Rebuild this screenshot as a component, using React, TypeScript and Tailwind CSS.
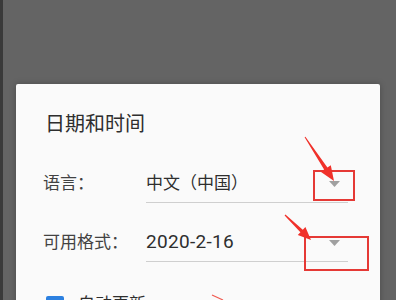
import React from "react";

function Caret() {
  return (
    <svg width="11" height="6" viewBox="0 0 11 6" className="absolute right-[8px] top-1/2 -translate-y-1/2">
      <path d="M0 0 H11 L5.5 6 Z" fill="#a0a0a0" />
    </svg>
  );
}

function Row({ label, value, latin }: { label: string; value: string; latin?: boolean }) {
  return (
    <div className="flex items-center">
      <div className="w-[103px] text-[17px] text-[#424242]">{label}</div>
      <div className="relative flex h-[38px] w-[202px] items-center border-b border-[#cfcfcf] text-[#2e2e2e]">
        <span className={latin ? "text-[19px] tracking-[0.3px]" : "text-[17px]"}>{value}</span>
        <Caret />
      </div>
    </div>
  );
}

// red annotation marks drawn on top of the screenshot
function Annotations() {
  return (
    <svg width="396" height="300" viewBox="0 0 396 300" className="pointer-events-none absolute left-0 top-0">
      <rect x="314" y="171" width="40" height="29" fill="none" stroke="#e53935" strokeWidth="2" />
      <rect x="305" y="237" width="63" height="33" fill="none" stroke="#e53935" strokeWidth="2" />
      <polygon
        points="304.6,137.3 324.1,169.6 320.7,171.8 334,181 330.8,165.2 327.4,167.4 305.4,136.7"
        fill="#f0312a"
      />
      <polygon
        points="284.6,215.4 300.4,232.3 297.8,235 311,240 305.4,227 302.8,229.7 285.4,214.6"
        fill="#f0312a"
      />
      <path d="M212 295 L223 300" stroke="#f05a50" strokeWidth="1.2" />
    </svg>
  );
}

export default function App() {
  return (
    <div
      className="relative h-[300px] w-[396px] overflow-hidden bg-[#646464]"
      style={{ fontFamily: 'Roboto, "Noto Sans CJK SC", sans-serif' }}
    >
      <div className="absolute left-0 top-0 h-full w-[3px] bg-[#3a3a3a]" />
      <div className="ml-[16px] pt-[84px]">
        <div className="h-[240px] w-[364px] rounded-[2px] bg-[#fafafa] pl-[27px] pt-[26px] shadow-[0_0_6px_rgba(0,0,0,0.25)]">
          <div className="h-[28px] pl-[2px] text-[20px] leading-[28px] text-[#2e2e2e]">日期和时间</div>
          <div className="mt-[27px] flex flex-col gap-[21px]">
            <Row label="语言：" value="中文（中国）" />
            <Row label="可用格式：" value="2020-2-16" latin />
          </div>
          <div className="mt-[30px] flex items-center gap-[14px] pl-[3px]">
            <div className="flex h-[18px] w-[18px] items-center justify-center rounded-[2px] bg-[#2c80e0]">
              <svg width="12" height="12" viewBox="0 0 12 12">
                <path d="M2 6.5 L5 9 L10 3" fill="none" stroke="#fff" strokeWidth="2" />
              </svg>
            </div>
            <span className="text-[17px] text-[#2e2e2e]">自动更新</span>
          </div>
        </div>
      </div>
      <Annotations />
    </div>
  );
}
